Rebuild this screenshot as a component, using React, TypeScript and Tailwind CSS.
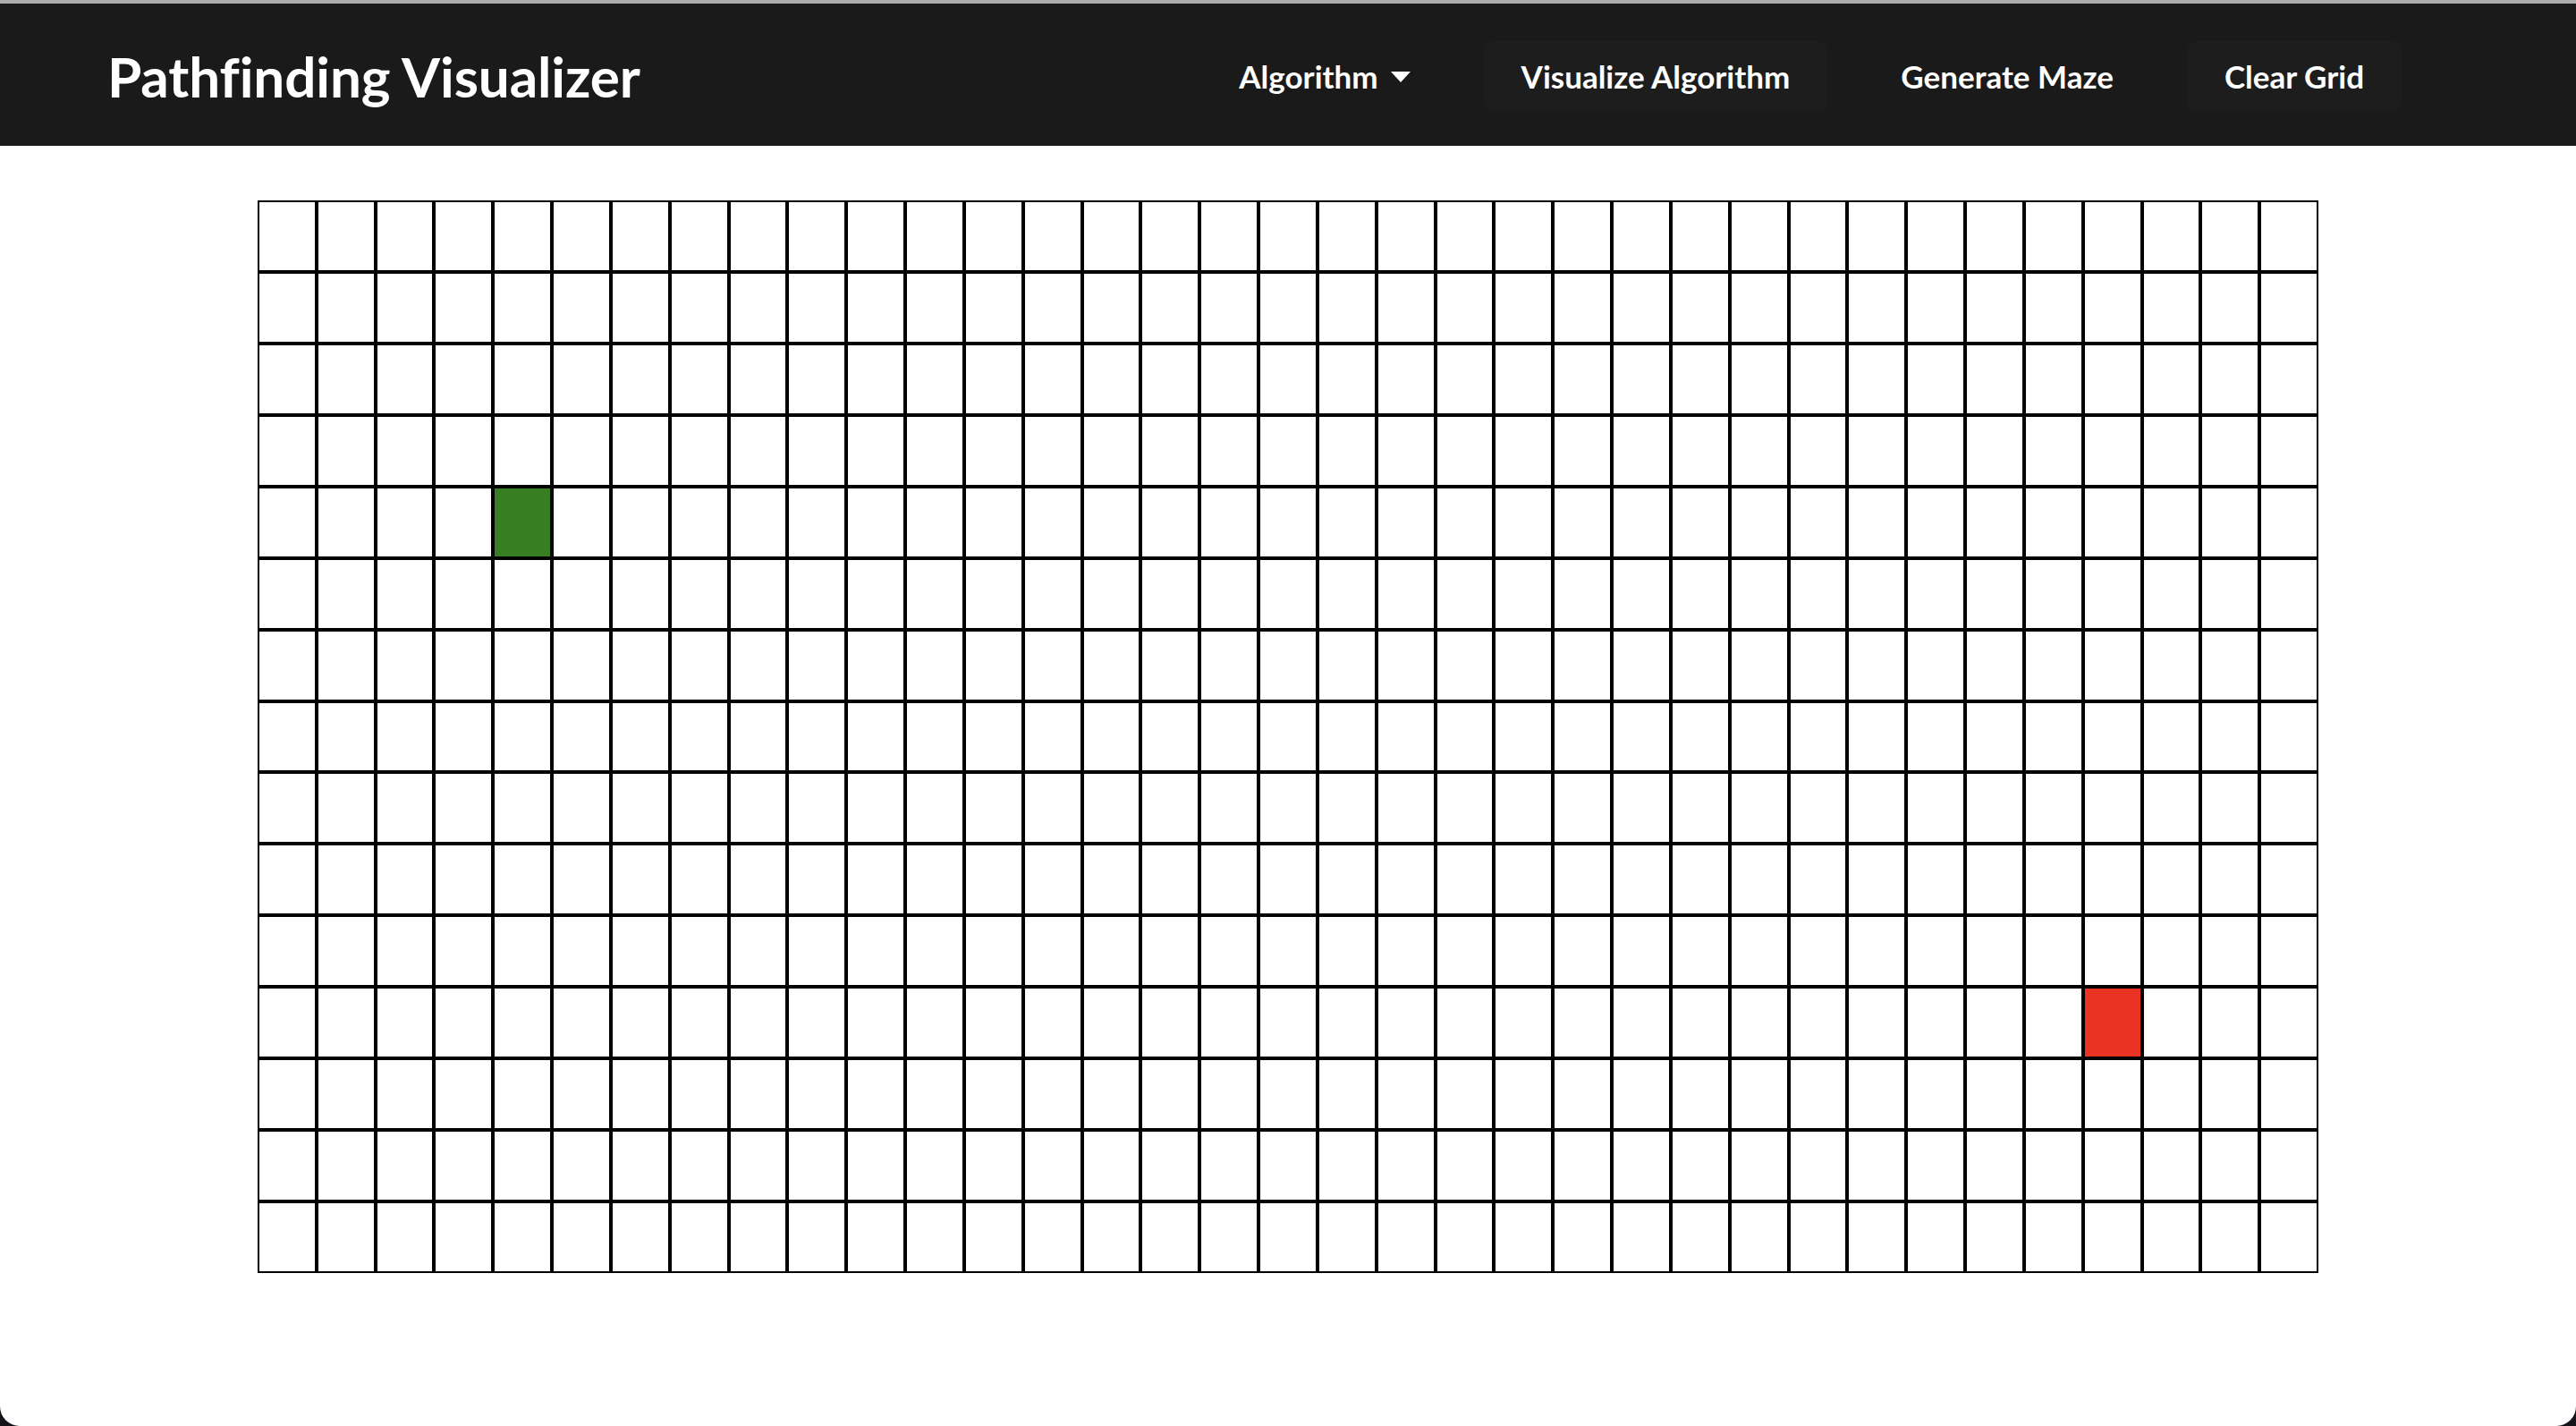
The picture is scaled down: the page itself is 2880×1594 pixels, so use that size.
import { useState } from 'react';

const ROWS = 15;
const COLS = 35;
const START = { row: 4, col: 4 };
const FINISH = { row: 11, col: 31 };

function Node({ row, col }: { row: number; col: number }) {
    const isStart = row === START.row && col === START.col;
    const isFinish = row === FINISH.row && col === FINISH.col;
    const fill = isStart ? 'bg-[#377d22]' : isFinish ? 'bg-[#ea3323]' : 'bg-white';
    return <div className={`border-2 border-black ${fill}`} />;
}

function Navbar() {
    const [open, setOpen] = useState(false);

    return (
        <nav className="flex h-[159px] items-center justify-between bg-[#1b1a1b] pl-[120px] pr-[195px] pt-[3px] text-white">
            <h1 className="text-[62px] font-bold tracking-[-0.1px]">Pathfinding Visualizer</h1>
            <div className="flex items-center gap-[40px] text-[35px] font-bold">
                <button
                    onClick={() => setOpen(!open)}
                    className="flex h-[78px] items-center gap-[14px] rounded-[10px] px-[42px]"
                >
                    Algorithm
                    <svg width="22" height="12" viewBox="0 0 22 12" className="mt-[2px]">
                        <path d="M0 0 H22 L11 12 Z" fill="white" />
                    </svg>
                </button>
                <button className="flex h-[78px] items-center rounded-[10px] bg-[#1d1d1d] px-[42px]">
                    Visualize Algorithm
                </button>
                <button className="flex h-[78px] items-center rounded-[10px] px-[42px]">
                    Generate Maze
                </button>
                <button className="flex h-[78px] items-center rounded-[10px] bg-[#1d1d1d] px-[42px]">
                    Clear Grid
                </button>
            </div>
        </nav>
    );
}

export default function App() {
    const nodes = [];
    for (let row = 0; row < ROWS; row++) {
        for (let col = 0; col < COLS; col++) {
            nodes.push(<Node key={`${row}-${col}`} row={row} col={col} />);
        }
    }

    return (
        <div className="h-[1594px] w-[2880px] bg-[#15151a] font-['Lato',sans-serif]">
            <div className="flex h-full flex-col overflow-hidden rounded-b-[22px] bg-white">
                <div className="h-[4px] bg-[#adadad]" />
                <Navbar />
                <main className="flex justify-center pt-[61px]">
                    <div className="grid h-[1199px] w-[2304px] grid-cols-[repeat(35,1fr)] grid-rows-[repeat(15,1fr)]">
                        {nodes}
                    </div>
                </main>
            </div>
        </div>
    );
}
